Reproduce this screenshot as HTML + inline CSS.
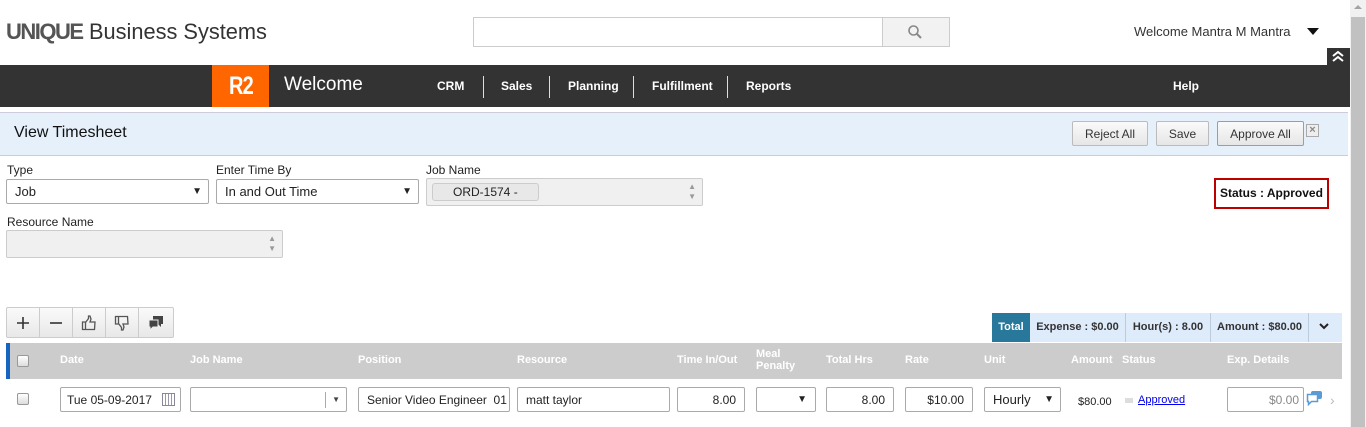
<!DOCTYPE html>
<html><head><style>
*{box-sizing:border-box;margin:0;padding:0}
body{width:1366px;height:427px;overflow:hidden;background:#fff;font-family:"Liberation Sans",Arial,sans-serif;position:relative;font-size:12px;color:#222}
.a{position:absolute}
.inp{position:absolute;border:1px solid #aaa;background:#fff;border-radius:2px;font-size:13px;padding:0 8px;display:flex;align-items:center;white-space:nowrap;overflow:hidden}
.th{position:absolute;top:354px;color:#fff;font-weight:bold;font-size:11px}
.btn{position:absolute;top:121px;height:25px;border:1px solid #bbb;background:linear-gradient(#fafafa,#e6e6e6);border-radius:2px;font-size:12px;display:flex;align-items:center;justify-content:center;color:#333}
.nav{position:absolute;top:79px;color:#fff;font-weight:bold;font-size:12px}
.sep{position:absolute;top:76px;width:1px;height:22px;background:#ddd}
.lbl{position:absolute;font-size:12px;color:#222}
.cb{position:absolute;width:12px;height:12px;border:1px solid #999;border-radius:2px;background:linear-gradient(#fff,#ddd)}
.tb{width:33px;border-right:1px solid #ccc;display:flex;align-items:center;justify-content:center}
</style></head><body>
<div class="a" style="left:6px;top:19px;font-size:22px;color:#555;white-space:nowrap"><b style="letter-spacing:-1.5px">UNIQUE</b> <span style="color:#333;display:inline-block;transform:scaleX(0.99);transform-origin:left">Business Systems</span></div>
<div class="a" style="left:473px;top:17px;width:477px;height:30px;border:1px solid #ccc;background:#fff"></div>
<div class="a" style="left:882px;top:17px;width:68px;height:30px;border:1px solid #ccc;background:#f2f2f2"></div>
<svg class="a" style="left:907px;top:24px" width="16" height="16"><circle cx="6.5" cy="6.5" r="4.5" fill="none" stroke="#888" stroke-width="1.6"/><line x1="10" y1="10" x2="14" y2="14" stroke="#888" stroke-width="2"/></svg>
<div class="a" style="left:1134px;top:24px;font-size:13px;color:#333">Welcome Mantra M Mantra</div>
<div class="a" style="left:1307px;top:28px;border-left:6px solid transparent;border-right:6px solid transparent;border-top:7px solid #111"></div>
<div class="a" style="left:1327px;top:48px;width:23px;height:17px;background:#333"></div>
<svg class="a" style="left:1331px;top:50px" width="14" height="12"><path d="M2 6l5-4 5 4M2 11l5-4 5 4" fill="none" stroke="#fff" stroke-width="2"/></svg>
<div class="a" style="left:0;top:65px;width:1350px;height:42px;background:#333"></div>
<div class="a" style="left:212px;top:65px;width:57px;height:42px;background:#f60"></div>
<div class="a" style="left:212px;top:65px;width:57px;height:42px;color:#fff;font-size:25px;font-weight:bold;text-align:center;line-height:42px;letter-spacing:-1px"><span style="display:inline-block;transform:scaleX(0.8)">R2</span></div>
<div class="a" style="left:284px;top:74px;color:#fff;font-size:19px">Welcome</div>
<div class="nav" style="left:437px">CRM</div><div class="sep" style="left:483px"></div>
<div class="nav" style="left:501px">Sales</div><div class="sep" style="left:549px"></div>
<div class="nav" style="left:568px">Planning</div><div class="sep" style="left:633px"></div>
<div class="nav" style="left:652px">Fulfillment</div><div class="sep" style="left:727px"></div>
<div class="nav" style="left:746px">Reports</div>
<div class="nav" style="left:1173px">Help</div>
<div class="a" style="left:0;top:112px;width:1348px;height:44px;background:#e6f0fa;border-top:1px solid #ccd;border-bottom:1px solid #ccd"></div>
<div class="a" style="left:14px;top:124px;font-size:16px;color:#111">View Timesheet</div>
<div class="btn" style="left:1072px;width:76px">Reject All</div>
<div class="btn" style="left:1156px;width:53px">Save</div>
<div class="btn" style="left:1217px;width:87px;border-color:#7ab">Approve All</div>
<div class="a" style="left:1306px;top:124px;width:13px;height:13px;border:1px solid #aaa;background:#eee;color:#888;font-size:11px;line-height:11px;text-align:center;font-weight:bold">×</div>
<div class="lbl" style="left:7px;top:163px">Type</div>
<div class="lbl" style="left:216px;top:163px">Enter Time By</div>
<div class="lbl" style="left:426px;top:163px">Job Name</div>
<div class="inp" style="left:6px;top:179px;width:203px;height:25px">Job<span style="position:absolute;right:6px;font-size:10px">▼</span></div>
<div class="inp" style="left:216px;top:179px;width:203px;height:25px">In and Out Time<span style="position:absolute;right:6px;font-size:10px">▼</span></div>
<div class="inp" style="left:426px;top:178px;width:277px;height:28px;background:#f0f0f0;border-color:#ccc;padding-left:5px"><span style="border:1px solid #ccc;border-radius:3px;background:#e8e8e8;padding:1px 20px;font-size:12px">ORD-1574 -</span><span style="position:absolute;right:6px;top:3px;font-size:8px;color:#999;line-height:10px">▲<br>▼</span></div>
<div class="a" style="left:1214px;top:178px;width:115px;height:31px;border:2px solid #b00;font-weight:bold;font-size:12px;padding-left:4px;line-height:27px;color:#111">Status : Approved</div>
<div class="lbl" style="left:7px;top:215px">Resource Name</div>
<div class="inp" style="left:6px;top:230px;width:277px;height:28px;background:#f0f0f0;border-color:#ccc"><span style="position:absolute;right:6px;top:3px;font-size:8px;color:#999;line-height:10px">▲<br>▼</span></div>
<div class="a" style="left:6px;top:307px;width:168px;height:31px;border:1px solid #ccc;border-radius:2px;background:linear-gradient(#fafafa,#e8e8e8);display:flex">
<div class="tb"><svg width="14" height="14"><path d="M7 1v12M1 7h12" stroke="#333" stroke-width="1.6"/></svg></div>
<div class="tb"><svg width="14" height="14"><path d="M1 7h12" stroke="#333" stroke-width="1.6"/></svg></div>
<div class="tb"><svg width="16" height="16"><path d="M1.5 7h3v7.5h-3zM4.5 7.5l3-4V1h1.5l1 3-1 3h5l-.5 7.5h-9" fill="none" stroke="#555" stroke-width="1.3"/></svg></div>
<div class="tb"><svg width="16" height="16" style="transform:scaleY(-1)"><path d="M1.5 7h3v7.5h-3zM4.5 7.5l3-4V1h1.5l1 3-1 3h5l-.5 7.5h-9" fill="none" stroke="#555" stroke-width="1.3"/></svg></div>
<div class="tb" style="border:none"><svg width="16" height="16"><path d="M5 1h10v8h-2v3l-3-3H5z" fill="#444"/><path d="M1 5h9v7H5l-3 3v-3H1z" fill="#444" stroke="#eee" stroke-width="1"/></svg></div></div>
<div class="a" style="left:992px;top:313px;width:350px;height:29px;background:#deebfb;display:flex;font-size:11px;font-weight:bold;color:#333;align-items:center">
<div style="width:38px;height:29px;background:#27789a;color:#fff;line-height:29px;text-align:center">Total</div>
<div style="width:96px;text-align:center;border-right:1px solid #bcd;line-height:29px">Expense : $0.00</div>
<div style="width:85px;text-align:center;border-right:1px solid #bcd;line-height:29px">Hour(s) : 8.00</div>
<div style="width:98px;text-align:center;border-right:1px solid #bcd;line-height:29px">Amount : $80.00</div>
<div style="width:30px;text-align:center"><svg width="12" height="10"><path d="M2 3l4 4 4-4" fill="none" stroke="#222" stroke-width="2"/></svg></div></div>
<div class="a" style="left:6px;top:343px;width:1336px;height:36px;background:#ccc;border-left:4px solid #1565c0"></div>
<div class="cb" style="left:17px;top:355px"></div>
<div class="th" style="left:60px">Date</div><div class="th" style="left:190px">Job Name</div><div class="th" style="left:358px">Position</div><div class="th" style="left:517px">Resource</div><div class="th" style="left:677px">Time In/Out</div>
<div class="th" style="left:756px;top:348px;line-height:12px">Meal<br>Penalty</div>
<div class="th" style="left:826px">Total Hrs</div><div class="th" style="left:905px">Rate</div><div class="th" style="left:984px">Unit</div><div class="th" style="left:1071px">Amount</div><div class="th" style="left:1122px">Status</div><div class="th" style="left:1227px">Exp. Details</div>
<div class="cb" style="left:17px;top:393px"></div>
<div class="inp" style="left:60px;top:387px;width:121px;height:25px;font-size:12px;padding-left:6px">Tue 05-09-2017<span style="position:absolute;right:5px;width:13px;height:13px;border:1px solid #889;background:repeating-linear-gradient(90deg,#fff 0 2px,#99a 2px 3px)"></span></div>
<div class="inp" style="left:190px;top:387px;width:157px;height:25px"><span style="position:absolute;right:20px;top:4px;width:1px;height:16px;background:#aaa"></span><span style="position:absolute;right:6px;font-size:8px;color:#444">▼</span></div>
<div class="inp" style="left:358px;top:387px;width:152px;height:25px;font-size:12px">Senior Video Engineer&nbsp; 01</div>
<div class="inp" style="left:517px;top:387px;width:153px;height:25px;font-size:12px">matt taylor</div>
<div class="inp" style="left:677px;top:387px;width:68px;height:25px;justify-content:flex-end;font-size:12px">8.00</div>
<div class="inp" style="left:756px;top:387px;width:60px;height:25px;justify-content:flex-end;font-size:10px">▼</div>
<div class="inp" style="left:826px;top:387px;width:68px;height:25px;justify-content:flex-end;font-size:12px">8.00</div>
<div class="inp" style="left:905px;top:387px;width:68px;height:25px;justify-content:flex-end;font-size:12px">$10.00</div>
<div class="inp" style="left:984px;top:387px;width:77px;height:25px;font-size:13px">Hourly<span style="position:absolute;right:6px;font-size:10px">▼</span></div>
<div class="a" style="left:1078px;top:396px;font-size:11px">$80.00</div>
<div class="a" style="left:1125px;top:398px;width:8px;height:5px;background:#ddd"></div>
<div class="a" style="left:1138px;top:394px;font-size:11px;color:#00e;text-decoration:underline">Approved</div>
<div class="inp" style="left:1227px;top:387px;width:77px;height:25px;justify-content:flex-end;font-size:12px;color:#888;padding-right:4px">$0.00</div>
<svg class="a" style="left:1306px;top:390px" width="17" height="16"><rect x="5" y="1" width="11" height="8" rx="2" fill="#5b9bd5"/><path d="M1.5 4.5h10v7h-6l-3 3v-3h-1z" fill="#fff" stroke="#5b9bd5" stroke-width="1.5"/></svg>
<div class="a" style="left:1330px;top:392px;color:#bbb;font-size:14px">›</div>
<div class="a" style="left:1350px;top:0;width:16px;height:427px;background:#f1f1f1"></div>
<div class="a" style="left:1351px;top:17px;width:14px;height:410px;background:#c1c1c1"></div>
<div class="a" style="left:1354px;top:5px;border-left:4px solid transparent;border-right:4px solid transparent;border-bottom:4px solid #a3a3a3"></div>
</body></html>
